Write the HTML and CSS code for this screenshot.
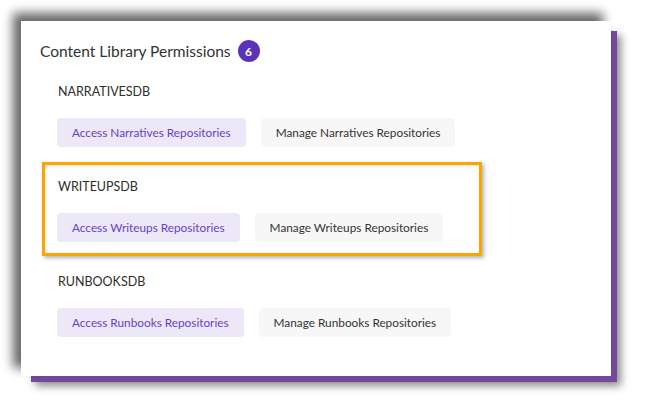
FILE: index.html
```html
<!DOCTYPE html>
<html lang="en">
<head>
<meta charset="utf-8">
<title>Content Library Permissions</title>
<link rel="stylesheet" href="styles.css">
</head>
<body>
<div class="page">
  <div class="card">
    <div class="title-row">
      <h1 class="title">Content Library Permissions</h1>
      <span class="badge">6</span>
    </div>
    <div class="sections">
      <section class="section">
        <div class="label">NARRATIVESDB</div>
        <div class="buttons">
          <span class="btn btn-access">Access Narratives Repositories</span>
          <span class="btn btn-manage">Manage Narratives Repositories</span>
        </div>
      </section>
      <section class="section highlighted">
        <div class="label">WRITEUPSDB</div>
        <div class="buttons">
          <span class="btn btn-access">Access Writeups Repositories</span>
          <span class="btn btn-manage">Manage Writeups Repositories</span>
        </div>
        <div class="highlight-box"></div>
      </section>
      <section class="section">
        <div class="label">RUNBOOKSDB</div>
        <div class="buttons">
          <span class="btn btn-access">Access Runbooks Repositories</span>
          <span class="btn btn-manage">Manage Runbooks Repositories</span>
        </div>
      </section>
    </div>
  </div>
</div>
</body>
</html>
```

FILE: styles.css
```css
html, body {
  margin: 0;
  padding: 0;
  background: #ffffff;
}

body {
  font-family: Lato, "Noto Sans", sans-serif;
  color: #333333;
}

.page {
  box-sizing: border-box;
  min-height: 418px;
  padding: 21px 0 0 21px;
}

.card {
  box-sizing: border-box;
  width: 590px;
  height: 355px;
  background: #ffffff;
  padding: 19px 19px 0 19px;
  box-shadow:
    -8px -8px 10px rgba(0, 0, 0, 0.6),
    8px 8px 0 -2px #74489b,
    12px 12px 8px -2px rgba(0, 0, 0, 0.45);
}

.title-row {
  display: flex;
  align-items: center;
  gap: 7px;
  height: 22px;
}

.title {
  margin: 0;
  font-size: 15.5px;
  font-weight: 400;
  color: #333333;
  line-height: 22px;
}

.badge {
  display: flex;
  align-items: center;
  justify-content: center;
  width: 22px;
  height: 22px;
  border-radius: 50%;
  background: #5a33b9;
  color: #ffffff;
  font-size: 12px;
  font-weight: 700;
}

.sections {
  display: flex;
  flex-direction: column;
  gap: 32px;
  margin-top: 22px;
  padding-left: 17px;
}

.section {
  position: relative;
  display: flex;
  flex-direction: column;
  gap: 18px;
}

.label {
  font-size: 12.5px;
  line-height: 16px;
  letter-spacing: 0;
  color: #2e2e2e;
  padding-left: 1px;
}

.buttons {
  display: flex;
  gap: 15px;
}

.btn {
  display: flex;
  align-items: center;
  height: 29px;
  padding: 0 15px;
  border-radius: 4px;
  font-size: 11.8px;
  white-space: nowrap;
}

.btn-access {
  background: #ece8f8;
  color: #6a3fc2;
}

.btn-manage {
  background: #f7f7f7;
  color: #333333;
}

.highlight-box {
  position: absolute;
  left: -15px;
  top: -17px;
  width: 440px;
  height: 94px;
  box-sizing: border-box;
  border: 3px solid #f6a800;
  box-shadow: 2px 2px 4px rgba(0, 0, 0, 0.3), inset 1px 1px 3px rgba(0, 0, 0, 0.15);
  pointer-events: none;
}
```
